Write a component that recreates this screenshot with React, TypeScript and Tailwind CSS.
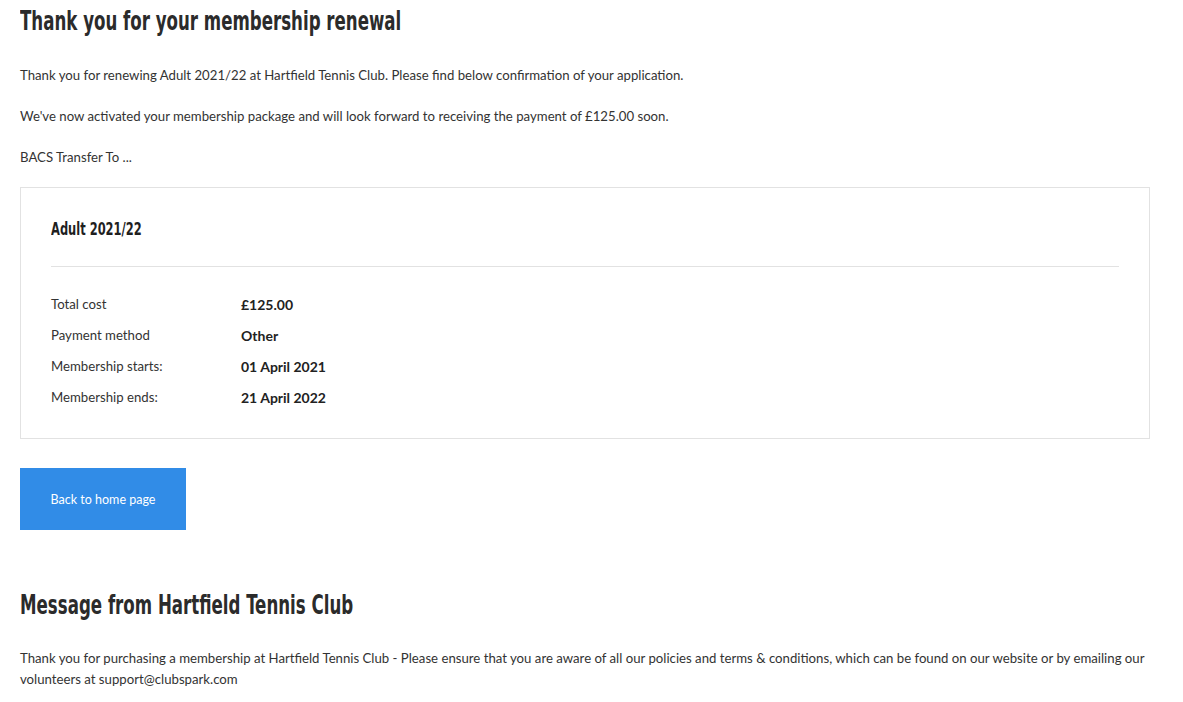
const details = [
  { label: 'Total cost', value: '£125.00' },
  { label: 'Payment method', value: 'Other' },
  { label: 'Membership starts:', value: '01 April 2021' },
  { label: 'Membership ends:', value: '21 April 2022' },
];

// no narrow heavy face installed, so squeeze DejaVu Sans Condensed
const headingFont = "font-['DejaVu_Sans_Condensed','DejaVu_Sans',sans-serif] inline-block origin-left scale-x-[0.685]";

export default function App() {
  return (
    <div className="min-h-screen bg-white font-['Lato',sans-serif] text-[13.2px] leading-[21px] text-[#333]">
      <div className="ml-5 w-[1130px]">
        <h1 className="pt-[4px] text-[27px] font-bold leading-[32px] text-[#2b2b2b]">
          <span className={headingFont}>Thank you for your membership renewal</span>
        </h1>

        <div className="mt-[28px] flex flex-col gap-[20px]">
          <p>Thank you for renewing Adult 2021/22 at Hartfield Tennis Club. Please find below confirmation of your application.</p>
          <p>We've now activated your membership package and will look forward to receiving the payment of £125.00 soon.</p>
          <p>BACS Transfer To ...</p>
        </div>

        <div className="mt-[19px] border border-[#e2e2e2] px-[30px] pt-[29px] pb-[30px]">
          <h2 className="text-[17px] font-bold leading-[24px] text-[#1f1f1f]">
            <span className="inline-block origin-left scale-x-[0.75] font-['DejaVu_Sans_Condensed','DejaVu_Sans',sans-serif]">
              Adult 2021/22
            </span>
          </h2>
          <div className="mt-[25px] border-t border-[#e2e2e2]" />
          <div className="mt-[27px] flex flex-col gap-[10px]">
            {details.map((row) => (
              <div key={row.label} className="flex">
                <span className="w-[190px]">{row.label}</span>
                <span className="text-[14px] font-bold text-[#222]">{row.value}</span>
              </div>
            ))}
          </div>
        </div>

        <a
          href="#"
          className="mt-[29px] flex h-[62px] w-[166px] items-center justify-center bg-[#318ce7] text-[12.5px] text-white"
        >
          Back to home page
        </a>

        <h2 className="mt-[58px] text-[27px] font-bold leading-[32px] text-[#2b2b2b]">
          <span className={headingFont}>Message from Hartfield Tennis Club</span>
        </h2>

        <p className="mt-[27px]">
          Thank you for purchasing a membership at Hartfield Tennis Club - Please ensure that you are aware of all our policies and terms &amp; conditions, which can be found on our website or by emailing our volunteers at support@clubspark.com
        </p>
      </div>
    </div>
  );
}
